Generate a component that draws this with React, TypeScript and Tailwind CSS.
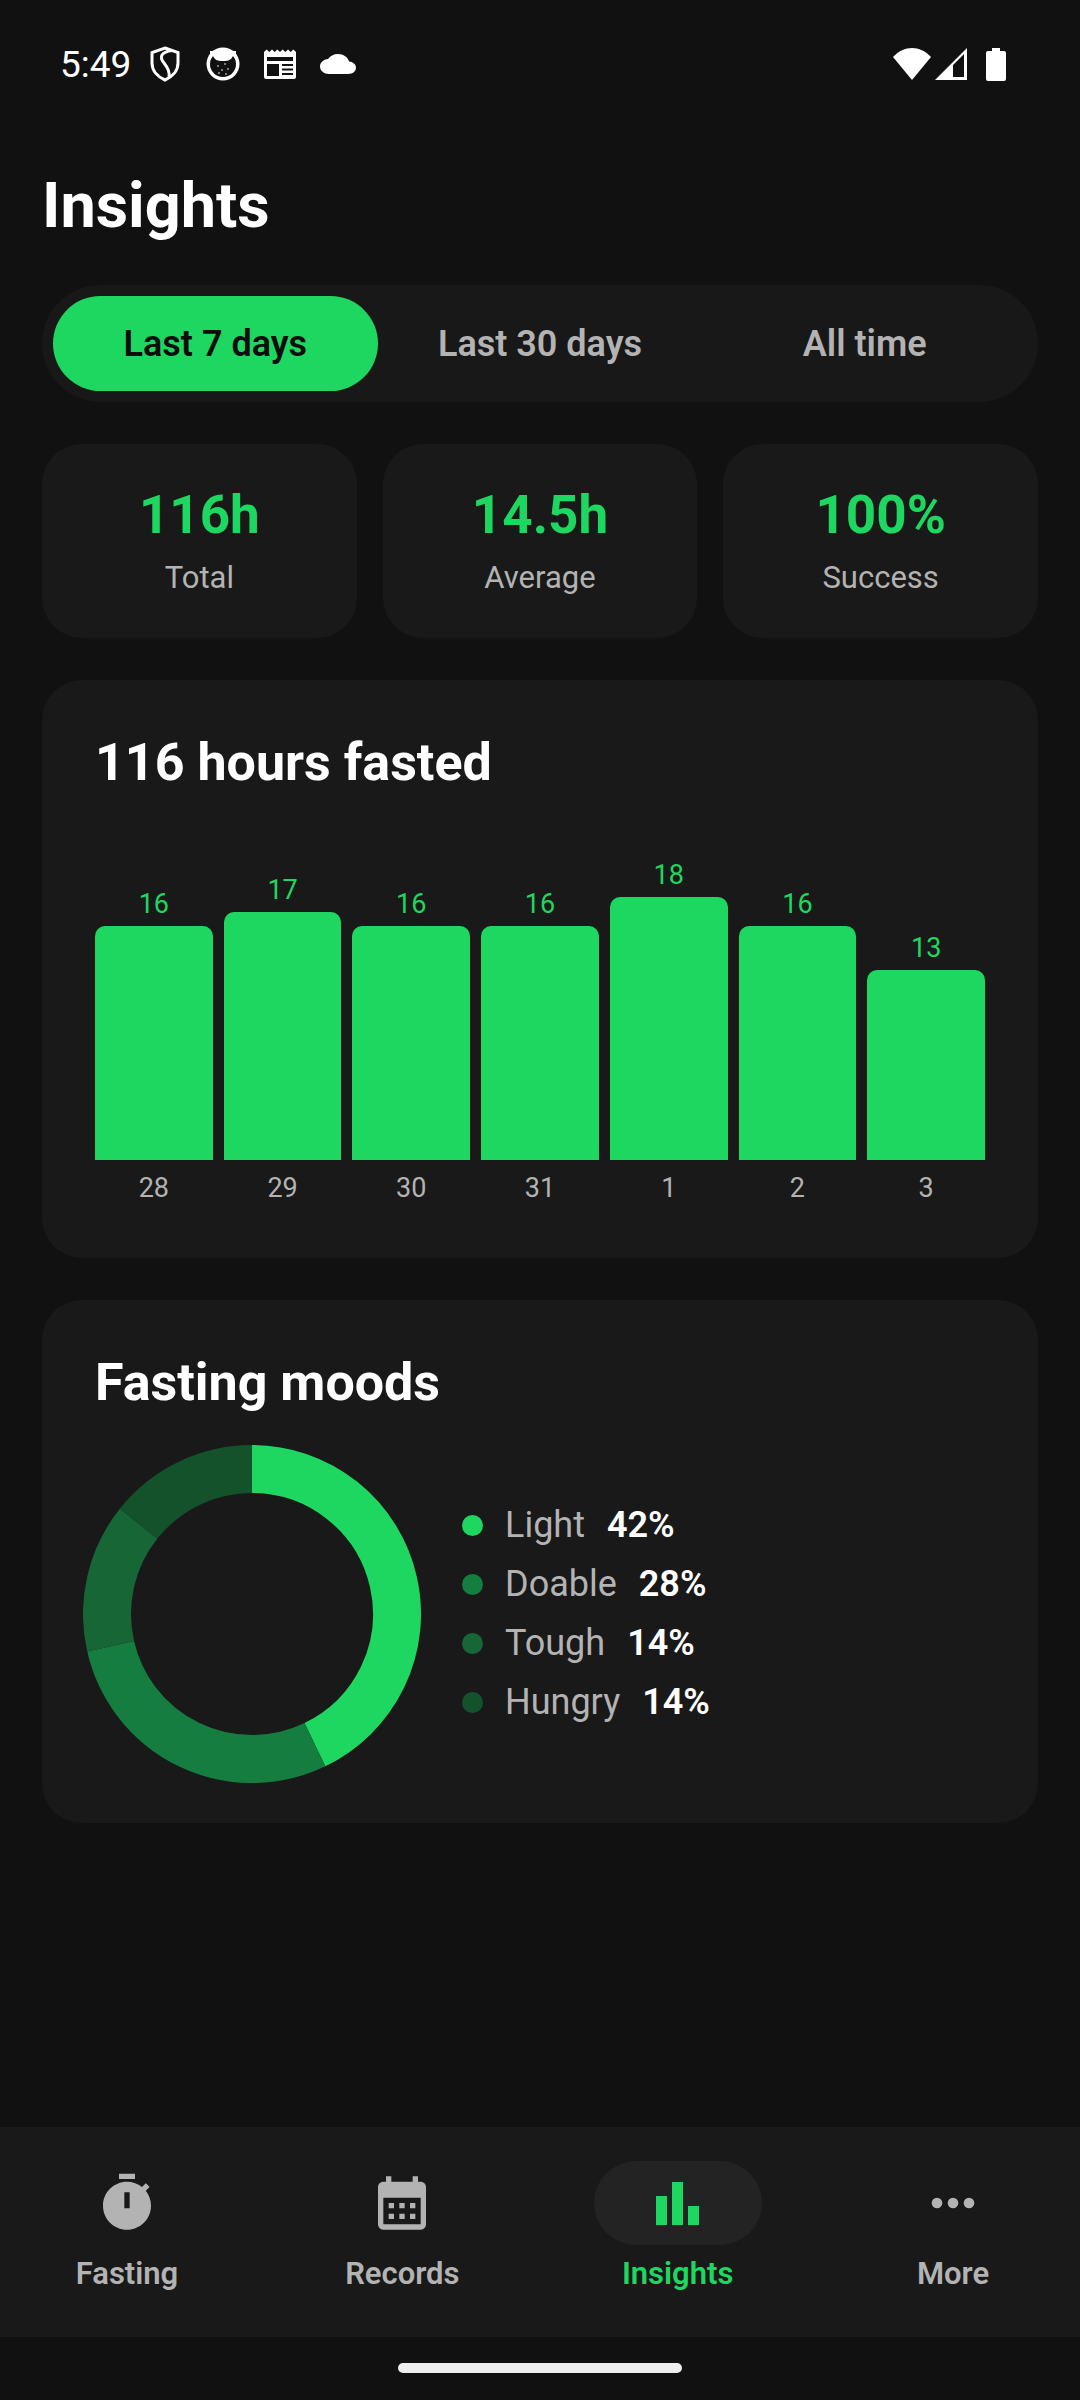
const tabs = ["Last 7 days", "Last 30 days", "All time"];

const stats = [
  { value: "116h", label: "Total" },
  { value: "14.5h", label: "Average" },
  { value: "100%", label: "Success" },
];

const bars = [
  { hours: 16, day: "28" },
  { hours: 17, day: "29" },
  { hours: 16, day: "30" },
  { hours: 16, day: "31" },
  { hours: 18, day: "1" },
  { hours: 16, day: "2" },
  { hours: 13, day: "3" },
];

const moods = [
  { name: "Light", pct: 42, color: "#1ed760", dot: "bg-[#1ed760]" },
  { name: "Doable", pct: 28, color: "#147d3f", dot: "bg-[#147d3f]" },
  { name: "Tough", pct: 14, color: "#166636", dot: "bg-[#166636]" },
  { name: "Hungry", pct: 14, color: "#14522c", dot: "bg-[#14522c]" },
];

function StatusBar() {
  return (
    <div className="flex h-[128px] shrink-0 items-center text-white pl-[60px] pr-[74px]">
      <span className="text-[37px] leading-none w-[69px] mr-[21px]">5:49</span>
      <svg width="30" height="36" viewBox="0 0 30 36" fill="none" stroke="white" strokeWidth="3" className="mr-[26px]">
        <path d="M15 2 L28 6.5 V17 C28 25 22 31 15 34 C8 31 2 25 2 17 V6.5 Z" />
        <path d="M22 4.5 C11 6 9 11 14 17 C18 22 20 26 19 31" />
      </svg>
      <svg width="34" height="34" viewBox="0 0 34 34" className="mr-[24px]">
        <circle cx="17" cy="17" r="16.5" fill="white" />
        <circle cx="17" cy="17" r="13" fill="#111" />
        <path d="M4 4 H30 V13 L27 9 C25 13 23 14 17 14 C11 14 9 13 7 9 L4 13 Z" fill="white" />
        <g fill="white">
          <circle cx="12" cy="19" r="0.8" />
          <circle cx="19" cy="17" r="0.8" />
          <circle cx="22" cy="22" r="0.8" />
          <circle cx="16" cy="23" r="0.8" />
          <circle cx="13" cy="26" r="0.8" />
          <circle cx="20" cy="27" r="0.8" />
        </g>
      </svg>
      <svg width="32" height="30" viewBox="0 0 32 30" className="mr-[24px]">
        <path
          fillRule="evenodd"
          fill="white"
          d="M0 3 L2.7 0.5 L5.3 3 L8 0.5 L10.7 3 L13.3 0.5 L16 3 L18.7 0.5 L21.3 3 L24 0.5 L26.7 3 L29.3 0.5 L32 3 V28 Q32 30 30 30 H2 Q0 30 0 28 Z M3 8 V12 H29 V8 Z M3 15 V27 H15 V15 Z M18 15 V17 H29 V15 Z M18 19.5 V21.5 H29 V19.5 Z M18 24 V26 H29 V24 Z"
        />
      </svg>
      <svg width="36" height="20" viewBox="0 4 24 16" preserveAspectRatio="none" fill="white">
        <path d="M19.35 10.04C18.67 6.59 15.64 4 12 4 9.11 4 6.6 5.64 5.35 8.04 2.34 8.36 0 10.91 0 14c0 3.31 2.69 6 6 6h13c2.76 0 5-2.24 5-5 0-2.64-2.05-4.78-4.65-4.96z" />
      </svg>
      <div className="flex-1" />
      <svg width="38" height="32" viewBox="0 0 38 32" fill="white" className="mr-[4px]">
        <path d="M19 32 L0 9 C11 -3 27 -3 38 9 Z" />
      </svg>
      <svg width="32" height="32" viewBox="0 0 32 32" fill="white" className="mr-[19px]">
        <path fillRule="evenodd" d="M0 32 L32 0 V32 Z M18 17 V29 H29 V6 Z" />
      </svg>
      <svg width="20" height="33" viewBox="0 0 20 33" fill="white">
        <path d="M6 0 H14 V3 H18 Q20 3 20 5 V31 Q20 33 18 33 H2 Q0 33 0 31 V5 Q0 3 2 3 H6 Z" />
      </svg>
    </div>
  );
}

function TimerIcon() {
  return (
    <svg width="64" height="64" viewBox="0 0 24 24" fill="#b3b3b3">
      <path
        fillRule="evenodd"
        d="M15 1H9v2h6V1z M19.03 7.39l1.42-1.42c-.43-.51-.9-.99-1.41-1.41l-1.42 1.42C16.07 4.74 14.12 4 12 4c-4.97 0-9 4.03-9 9s4.02 9 9 9 9-4.03 9-9c0-2.12-.74-4.07-1.97-5.61z M13 14h-2V8h2v6z"
      />
    </svg>
  );
}

function CalendarIcon() {
  return (
    <svg width="64" height="64" viewBox="0 0 24 24" fill="#b3b3b3">
      <path
        fillRule="evenodd"
        d="M19 4h-1V2h-2v2H8V2H6v2H5c-1.1 0-2 .9-2 2v14c0 1.1.9 2 2 2h14c1.1 0 2-.9 2-2V6c0-1.1-.9-2-2-2z M19 20H5V10h14v10z"
      />
      <path d="M9 14H7v-2h2v2zm4 0h-2v-2h2v2zm4 0h-2v-2h2v2zm-8 4H7v-2h2v2zm4 0h-2v-2h2v2zm4 0h-2v-2h2v2z" />
    </svg>
  );
}

function BarsIcon() {
  return (
    <svg width="64" height="64" viewBox="0 0 64 64" fill="#1ed760">
      <rect x="10" y="25" width="11" height="29" />
      <rect x="26" y="11" width="11" height="43" />
      <rect x="42" y="35" width="11" height="19" />
    </svg>
  );
}

function MoreIcon() {
  return (
    <svg width="64" height="64" viewBox="0 0 24 24" fill="#b3b3b3">
      <circle cx="6" cy="12" r="2" />
      <circle cx="12" cy="12" r="2" />
      <circle cx="18" cy="12" r="2" />
    </svg>
  );
}

function NavItem({ label, icon, active }: { label: string; icon: React.ReactNode; active?: boolean }) {
  return (
    <div className="flex w-[168px] flex-col items-center">
      <div className={`flex h-[84px] w-[168px] items-center justify-center rounded-full ${active ? "bg-[#232323]" : ""}`}>
        {icon}
      </div>
      <span className={`mt-[11px] text-[31px] leading-[36px] font-semibold ${active ? "text-[#1ed760]" : "text-[#b3b3b3]"}`}>
        {label}
      </span>
    </div>
  );
}

function Donut() {
  const total = moods.reduce((sum, m) => sum + m.pct, 0);
  let start = 0;
  const point = (a: number) => {
    const rad = (a * Math.PI) / 180;
    return `${169 + 145 * Math.sin(rad)} ${169 - 145 * Math.cos(rad)}`;
  };
  return (
    <svg width="338" height="338" viewBox="0 0 338 338" className="shrink-0">
      {moods.map((m) => {
        const sweep = (m.pct / total) * 360;
        const d = `M${point(start)} A145 145 0 ${sweep > 180 ? 1 : 0} 1 ${point(start + sweep)}`;
        start += sweep;
        return <path key={m.name} d={d} fill="none" stroke={m.color} strokeWidth="48" />;
      })}
    </svg>
  );
}

export default function App() {
  return (
    <div className="flex h-[2400px] w-[1080px] flex-col bg-[#111111] font-['Roboto',sans-serif]">
      <StatusBar />

      <div className="flex flex-col px-[42px]">
        <h1 className="mt-[45px] text-[63px] leading-[66px] font-bold text-white">Insights</h1>

        <div className="mt-[46px] flex rounded-full bg-[#181818] p-[11px]">
          {tabs.map((t, i) => (
            <div
              key={t}
              className={`flex h-[95px] flex-1 items-center justify-center rounded-full text-[36px] font-semibold ${
                i === 0 ? "bg-[#1ed760] text-[#0d0d0d]" : "text-[#b3b3b3]"
              }`}
            >
              {t}
            </div>
          ))}
        </div>

        <div className="mt-[42px] grid grid-cols-3 gap-[26px]">
          {stats.map((s) => (
            <div key={s.label} className="flex h-[194px] flex-col items-center justify-center rounded-[40px] bg-[#191919]">
              <span className="text-[53px] leading-[60px] font-bold text-[#1ed760]">{s.value}</span>
              <span className="mt-[13px] text-[31px] leading-[40px] text-[#b3b3b3]">{s.label}</span>
            </div>
          ))}
        </div>

        <div className="mt-[42px] rounded-[40px] bg-[#191919] px-[53px] pt-[60px] pb-[54px]">
          <h2 className="text-[52px] leading-[46px] font-bold text-white">116 hours fasted</h2>
          <div className="mt-[73px] flex items-end gap-[11px]">
            {bars.map((b, i) => (
              <div key={i} className="flex flex-1 flex-col items-center">
                <span className="mb-[6px] text-[27px] leading-[32px] text-[#1ed760]">{b.hours}</span>
                <div className="w-full rounded-t-[10px] bg-[#1ed760]" style={{ height: b.hours * 14.6 }} />
                <span className="mt-[12px] text-[27px] leading-[32px] text-[#b3b3b3]">{b.day}</span>
              </div>
            ))}
          </div>
        </div>

        <div className="mt-[42px] rounded-[40px] bg-[#191919] pt-[60px] pb-[40px]">
          <h2 className="pl-[53px] text-[52px] leading-[46px] font-bold text-white">Fasting moods</h2>
          <div className="mt-[39px] flex items-center gap-[41px] pl-[41px]">
            <Donut />
            <div className="flex flex-col">
              {moods.map((m) => (
                <div key={m.name} className="flex h-[59px] items-center">
                  <div className={`h-[21px] w-[21px] rounded-full ${m.dot}`} />
                  <span className="ml-[22px] text-[36px] text-[#b3b3b3]">{m.name}</span>
                  <span className="ml-[22px] text-[36px] font-semibold text-white">{m.pct}%</span>
                </div>
              ))}
            </div>
          </div>
        </div>
      </div>

      <div className="flex-1" />

      <div className="flex h-[210px] shrink-0 justify-between bg-[#191919] px-[43px] pt-[34px]">
        <NavItem label="Fasting" icon={<TimerIcon />} />
        <NavItem label="Records" icon={<CalendarIcon />} />
        <NavItem label="Insights" icon={<BarsIcon />} active />
        <NavItem label="More" icon={<MoreIcon />} />
      </div>

      <div className="flex h-[63px] shrink-0 justify-center pt-[26px]">
        <div className="h-[10px] w-[284px] rounded-full bg-[#eeeeee]" />
      </div>
    </div>
  );
}
